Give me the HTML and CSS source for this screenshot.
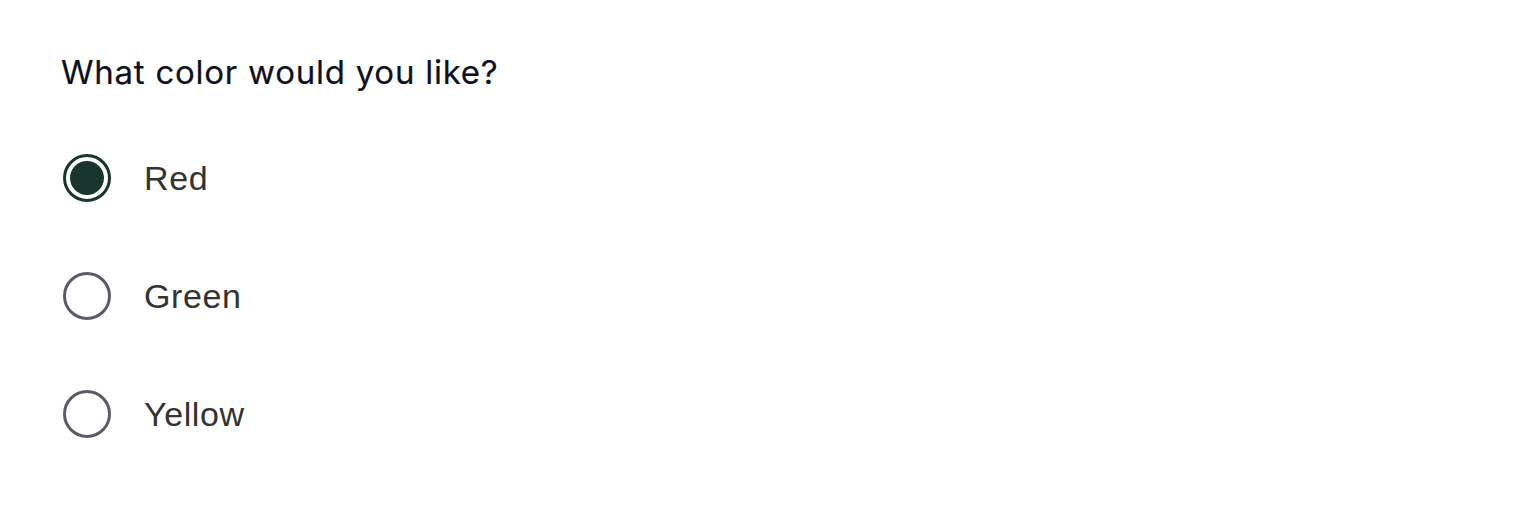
FILE: index.html
```html
<!DOCTYPE html>
<html lang="en">
<head>
<meta charset="utf-8">
<link rel="stylesheet" href="styles.css">
</head>
<body>
<div class="group" role="radiogroup" aria-labelledby="q">
  <div class="question" id="q">What color would you like?</div>
  <div class="options">
    <label class="option"><span class="radio radio--checked"><span class="dot"></span></span><span class="label">Red</span></label>
    <label class="option"><span class="radio"></span><span class="label">Green</span></label>
    <label class="option"><span class="radio"></span><span class="label">Yellow</span></label>
  </div>
</div>
</body>
</html>
```
FILE: styles.css
```css
html, body {
  margin: 0;
  background: #ffffff;
}
.group {
  padding: 52px 0 0 61px;
}
.question {
  font-family: Inter, "Noto Sans", sans-serif;
  font-size: 33px;
  line-height: 40px;
  font-weight: 400;
  color: #0f1120;
  letter-spacing: 0.75px;
  -webkit-text-stroke: 0.2px #0f1120;
}
.options {
  display: flex;
  flex-direction: column;
  gap: 70px;
  margin-top: 62px;
}
.option {
  display: flex;
  align-items: center;
  gap: 33px;
  height: 48px;
}
.radio {
  box-sizing: border-box;
  width: 48px;
  height: 48px;
  border-radius: 50%;
  border: 3px solid #5b5c66;
  display: flex;
  align-items: center;
  justify-content: center;
  flex: none;
  margin-left: 2px;
}
.radio--checked {
  border-color: #18362d;
}
.dot {
  width: 34px;
  height: 34px;
  border-radius: 50%;
  background: #18362d;
}
.label {
  font-family: "Liberation Sans", Arial, sans-serif;
  font-size: 34px;
  letter-spacing: 0.6px;
  color: #333333;
}
```
